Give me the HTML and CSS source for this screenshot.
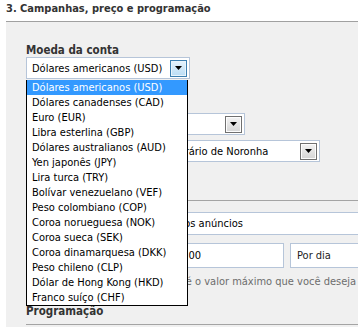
FILE: index.html
```html
<!DOCTYPE html>
<html lang="pt-BR">
<head>
<meta charset="utf-8">
<link rel="stylesheet" href="styles.css">
</head>
<body>
<h3 class="title">3. Campanhas, preço e programação</h3>
<section class="panel">
  <div class="label">Moeda da conta</div>
  <div class="select focused w-currency">
    <span class="value">Dólares americanos (USD)</span>
    <span class="btn"><svg width="7" height="4" viewBox="0 0 7 4"><path d="M0 0h7L3.5 4z" fill="#000"/></svg></span>
  </div>
  <ul class="listbox">
    <li class="selected">Dólares americanos (USD)</li>
    <li>Dólares canadenses (CAD)</li>
    <li>Euro (EUR)</li>
    <li>Libra esterlina (GBP)</li>
    <li>Dólares australianos (AUD)</li>
    <li>Yen japonês (JPY)</li>
    <li>Lira turca (TRY)</li>
    <li>Bolívar venezuelano (VEF)</li>
    <li>Peso colombiano (COP)</li>
    <li>Coroa norueguesa (NOK)</li>
    <li>Coroa sueca (SEK)</li>
    <li>Coroa dinamarquesa (DKK)</li>
    <li>Peso chileno (CLP)</li>
    <li>Dólar de Hong Kong (HKD)</li>
    <li>Franco suíço (CHF)</li>
  </ul>
  <div class="select w-country">
    <span class="value">Brasil</span>
    <span class="btn"><svg width="7" height="4" viewBox="0 0 7 4"><path d="M0 0h7L3.5 4z" fill="#000"/></svg></span>
  </div>
  <div class="select w-zone">
    <span class="value">(GMT -02:00) Brasília - Fuso horário de Noronha</span>
    <span class="btn"><svg width="7" height="4" viewBox="0 0 7 4"><path d="M0 0h7L3.5 4z" fill="#000"/></svg></span>
  </div>
  <div class="rule"></div>
  <div class="input w-name">Mesmo orçamento para todos os anúncios</div>
  <div class="budget-row">
    <span class="budget-label">Orçamento (R$)</span>
    <div class="input w-amount">1.000,00</div>
    <div class="select w-period"><span class="value">Por dia</span></div>
  </div>
  <p class="help">O seu orçamento médio por dia é o valor máximo que você deseja</p>
  <div class="subhead">Programação</div>
  <div class="rule"></div>
</section>
</body>
</html>
```
FILE: styles.css
```css
html, body {
  margin: 0;
  padding: 0;
  background: #fff;
  overflow: hidden;
}
body {
  font-family: "DejaVu Sans Condensed", "DejaVu Sans", sans-serif;
  font-size: 11px;
  color: #000;
  width: 358px;
  height: 327px;
}
.title {
  margin: 0;
  height: 21px;
  box-sizing: border-box;
  padding: 2px 0 0 6px;
  font-size: 11px;
  line-height: 13px;
  font-weight: bold;
  color: #333;
}
.panel {
  position: relative;
  margin-left: 6px;
  border-top: 1px solid #a0a0a0;
  background: #f0f0f0;
  padding: 0 0 0 20px;
  height: 306px;
  overflow: hidden;
}
.label {
  margin-top: 21px;
  font-size: 11.5px;
  line-height: 14px;
  font-weight: bold;
  color: #333;
}
.subhead {
  margin-top: 15px;
  font-size: 11.5px;
  line-height: 14px;
  font-weight: bold;
  color: #333;
}
.select, .input {
  box-sizing: border-box;
  display: flex;
  align-items: center;
  flex: none;
  height: 22px;
  border: 1px solid #b6c5d9;
  background: #fff;
  padding-left: 5px;
  white-space: nowrap;
  overflow: hidden;
}
.value { flex: 1; overflow: hidden; }
.btn {
  flex: none;
  box-sizing: border-box;
  width: 17px;
  height: 17px;
  margin-right: 2px;
  display: flex;
  align-items: center;
  justify-content: center;
  border: 1px solid #707070;
  box-shadow: inset 0 0 0 1px #fdfdfd;
  background: linear-gradient(#f3f3f3, #d5d5d5);
}
.focused .btn {
  border-color: #3c7fb1;
  box-shadow: inset 0 0 0 1px #e8f4fc;
  background: linear-gradient(#e6f3fc, #b9dcf5);
}
.w-currency { width: 164px; }
.w-country { width: 219px; margin-top: 34px; }
.w-zone { width: 294px; margin-top: 5px; }
.rule {
  height: 1px;
  background: #a4a4a4;
}
.w-zone + .rule { margin-top: 38px; }
.subhead + .rule { margin-top: 6px; }
.w-name { width: 360px; height: 23px; margin-top: 11px; padding-left: 6px; }
.budget-row {
  display: flex;
  align-items: center;
  margin-top: 8px;
  height: 25px;
}
.budget-label { width: 125px; flex: none; }
.w-amount { width: 133px; height: 25px; }
.w-period { width: 100px; height: 25px; margin-left: 6px; padding-left: 6px; color: #222; }
.help {
  margin: 7px 0 0;
  line-height: 14px;
  color: #6d6d6d;
  white-space: nowrap;
}
.listbox {
  position: absolute;
  top: 58px;
  left: 20px;
  width: 162px;
  box-sizing: border-box;
  margin: 0;
  padding: 0;
  list-style: none;
  background: #fff;
  border: 1px solid #000;
  border-top: 0;
  z-index: 2;
}
.listbox li {
  height: 15px;
  line-height: 15px;
  padding-left: 5px;
  white-space: nowrap;
}
.listbox .selected {
  background: #3399ff;
  color: #fff;
}
```
